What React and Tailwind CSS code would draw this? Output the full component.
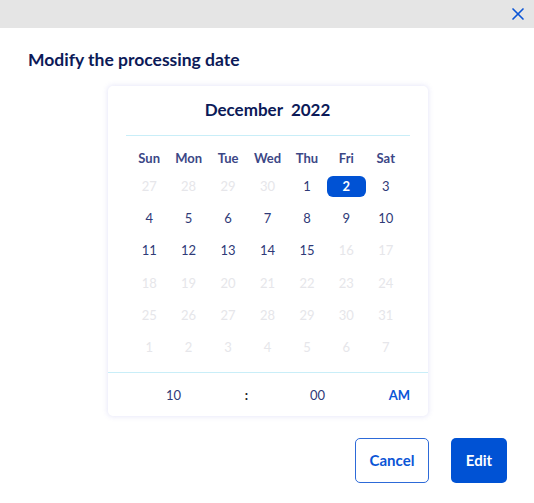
import { X } from "lucide-react";

const weekdays = ["Sun", "Mon", "Tue", "Wed", "Thu", "Fri", "Sat"];

// Dec 2022 grid, with the days outside the allowed range faded
const days = [
  [27, 28, 29, 30, 1, 2, 3],
  [4, 5, 6, 7, 8, 9, 10],
  [11, 12, 13, 14, 15, 16, 17],
  [18, 19, 20, 21, 22, 23, 24],
  [25, 26, 27, 28, 29, 30, 31],
  [1, 2, 3, 4, 5, 6, 7],
];

const isEnabled = (row, col) => {
  if (row === 0) return col >= 4;
  if (row === 1) return true;
  if (row === 2) return col <= 4;
  return false;
};

export default function App() {
  return (
    <div className="w-[534px] h-[503px] bg-white font-['Lato',sans-serif] overflow-hidden">
      <div className="h-[28px] bg-[#e5e5e5] flex items-center justify-end pr-[6px]">
        <X className="w-[20px] h-[20px] text-[#0b55d6]" strokeWidth={2} />
      </div>

      <div className="px-[28px] pt-[21px]">
        <h2 className="text-[17.5px] font-bold text-[#0c1a58] leading-[22px]">
          Modify the processing date
        </h2>
      </div>

      <div className="flex justify-center pl-[1px] mt-[15px]">
        <div className="w-[320px] rounded-[5px] bg-white shadow-[0_0_5px_1px_rgba(120,120,220,0.16)]">
          <div className="pt-[13px] text-center text-[17px] font-bold text-[#0c1a58] leading-[22px]">
            December&nbsp;&nbsp;2022
          </div>
          <div className="mx-[18px] mt-[14px] border-t border-[#c9eef8]" />

          <div className="px-[22px] pt-[13px] pb-[14px]">
            <div className="grid grid-cols-7 text-center text-[13px] font-bold text-[#3c4786] leading-[18px]">
              {weekdays.map((d) => (
                <div key={d}>{d}</div>
              ))}
            </div>
            <div className="mt-[9px] flex flex-col gap-[11.2px]">
              {days.map((week, r) => (
                <div key={r} className="grid grid-cols-7 text-center text-[13px] leading-[21px]">
                  {week.map((d, c) => {
                    const selected = r === 0 && c === 5;
                    if (selected) {
                      return (
                        <div
                          key={c}
                          className="rounded-[6px] bg-[#0052d4] text-white font-bold"
                        >
                          {d}
                        </div>
                      );
                    }
                    return (
                      <div
                        key={c}
                        className={isEnabled(r, c) ? "text-[#2f3a78]" : "text-[#e6e6ea]"}
                      >
                        {d}
                      </div>
                    );
                  })}
                </div>
              ))}
            </div>
          </div>

          <div className="border-t border-[#c9eef8] h-[44px] pt-[2px] flex items-center text-[13px] leading-[18px]">
            <div className="w-[132px] text-center text-[#2f3a78]">10</div>
            <div className="w-[14px] text-center font-bold text-[#222]">:</div>
            <div className="w-[128px] text-center text-[#2f3a78]">00</div>
            <div className="flex-1 text-center pr-[10px] font-bold text-[#0b55d6]">AM</div>
          </div>
        </div>
      </div>

      <div className="flex justify-end gap-[22px] pr-[27px] mt-[22px]">
        <button className="w-[74px] h-[45px] rounded-[5px] border border-[#2d6ad8] text-[#0b55d6] font-bold text-[15px] bg-white">
          Cancel
        </button>
        <button className="w-[56px] h-[45px] rounded-[5px] bg-[#0052d4] text-white font-bold text-[15px]">
          Edit
        </button>
      </div>
    </div>
  );
}
